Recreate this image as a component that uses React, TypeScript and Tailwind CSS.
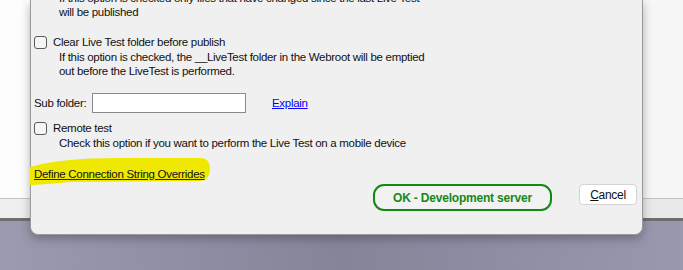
import React from 'react';

const font = { fontFamily: '"Segoe UI", "Liberation Sans", Arial, sans-serif' };

function CheckBox() {
  return <span className="inline-block w-[13px] h-[13px] rounded-[3px] border border-[#5a5a5a] bg-[#f5f5f5] shrink-0" />;
}

type OptionProps = {
  label: string
  lines: string[]
}

function Option({ label, lines }: OptionProps) {
  return (
    <div className="flex flex-col">
      <div className="flex items-center h-[14px]">
        <CheckBox />
        <span className="ml-[6px]">{label}</span>
      </div>
      <div className="pl-[25px] pt-px">
        {lines.map((l, i) => (
          <div key={i} className="h-[14px] leading-[14px] whitespace-nowrap">{l}</div>
        ))}
      </div>
    </div>
  );
}

export default function App() {
  return (
    <div className="relative w-[683px] h-[270px] overflow-hidden text-[11.5px] tracking-[-0.3px] text-[#111]" style={font}>
      {/* desktop behind the dialog */}
      <div className="flex flex-col h-full">
        <div className="h-[198px] bg-gradient-to-r from-[#fdfdfd] to-[#f6f6f6]" />
        <div className="h-px bg-[#c4c4c4]" />
        <div className="h-[19px] bg-gradient-to-r from-[#efefef] to-[#e9e9e9]" />
        <div className="h-[3px] bg-[#6e6e6e]" />
        <div className="flex-1 bg-gradient-to-r from-[#9a9ab0] via-[#85859a] to-[#9898ae]" />
      </div>

      {/* dialog window */}
      <div className="absolute left-[30px] top-0 w-[613px] h-[235px] bg-[#f0f0f0] border-x border-b border-[#9a9a9a] rounded-b-[8px] shadow-[0_4px_10px_rgba(40,40,60,0.35)]">
        <div className="flex flex-col pl-[3px] -mt-[9px] leading-[14px]">
          <div className="pl-[25px] whitespace-nowrap">
            <div className="h-[14px]">If this option is checked only files that have changed since the last Live Test</div>
            <div className="h-[14px]">will be published</div>
          </div>

          <div className="mt-[16px]">
            <Option
              label="Clear Live Test folder before publish"
              lines={[
                'If this option is checked, the __LiveTest folder in the Webroot will be emptied',
                'out before the LiveTest is performed.',
              ]}
            />
          </div>

          <div className="flex items-center mt-[15px] h-[20px]">
            <span className="w-[58px] whitespace-nowrap">Sub folder:</span>
            <div className="w-[154px] h-[20px] bg-white border border-[#8a8a8a]" />
            <a className="ml-[26px] text-[#0000ff] underline cursor-pointer">Explain</a>
          </div>

          <div className="mt-[8px]">
            <Option
              label="Remote test"
              lines={['Check this option if you want to perform the Live Test on a mobile device']}
            />
          </div>

          <div className="relative mt-[17px] h-[14px]">
            <svg className="absolute left-[-4px] top-[-10px]" width="182" height="30" viewBox="0 0 182 30">
              <path d="M0,10 Q30,1 90,1 L172,1 Q180,2 180,12 Q179,24 170,24 L40,25 Q10,28 0,28 Z" fill="#efe800" />
            </svg>
            <span className="relative underline decoration-[#1a1aa0] whitespace-nowrap">Define Connection String Overrides</span>
          </div>
        </div>

        <div className="absolute right-[5px] top-[184px] flex items-start gap-[27px]">
          <button className="w-[179px] h-[27px] rounded-[11px] border-[2px] border-[#118a11] bg-[#f2f2f2] text-[#178717] font-bold text-[12px] tracking-[-0.2px]">
            OK - Development server
          </button>
          <button className="w-[58px] h-[21px] rounded-[4px] border border-[#d4d4d4] bg-white text-[12px] text-[#111]">
            <span className="underline">C</span>ancel
          </button>
        </div>
      </div>
    </div>
  );
}
